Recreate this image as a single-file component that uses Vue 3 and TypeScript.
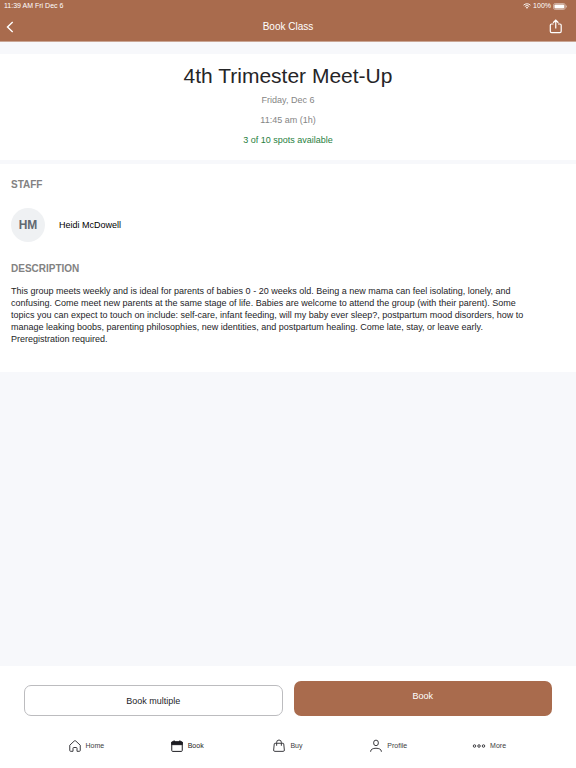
<script setup lang="ts">
import { ref } from 'vue'

type TabId = 'home' | 'book' | 'buy' | 'profile' | 'more'

interface Tab {
  id: TabId
  label: string
}

const tabs: Tab[] = [
  { id: 'home', label: 'Home' },
  { id: 'book', label: 'Book' },
  { id: 'buy', label: 'Buy' },
  { id: 'profile', label: 'Profile' },
  { id: 'more', label: 'More' },
]

const activeTab = ref<TabId>('book')

const session = {
  title: '4th Trimester Meet-Up',
  date: 'Friday, Dec 6',
  time: '11:45 am (1h)',
  spots: '3 of 10 spots available',
  staff: { initials: 'HM', name: 'Heidi McDowell' },
  description:
    'This group meets weekly and is ideal for parents of babies 0 - 20 weeks old. Being a new mama can feel isolating, lonely, and confusing. Come meet new parents at the same stage of life. Babies are welcome to attend the group (with their parent). Some topics you can expect to touch on include: self-care, infant feeding, will my baby ever sleep?, postpartum mood disorders, how to manage leaking boobs, parenting philosophies, new identities, and postpartum healing. Come late, stay, or leave early. Preregistration required.',
}
</script>

<template>
  <div class="screen">
    <header class="top">
      <div class="status">
        <span>11:39 AM Fri Dec 6</span>
        <span class="status-right">
          <svg class="wifi" viewBox="0 0 16 12" aria-hidden="true">
            <path d="M1 4.4a10 10 0 0 1 14 0M3.6 7a6.3 6.3 0 0 1 8.8 0" fill="none" stroke="currentColor" stroke-width="1.8" />
            <path d="M8 11.6 5.6 9.1a3.5 3.5 0 0 1 4.8 0z" fill="currentColor" />
          </svg>
          <span>100%</span>
          <svg class="battery" viewBox="0 0 28 14" aria-hidden="true">
            <rect x="1" y="1" width="23.5" height="12" rx="3.6" fill="none" stroke="currentColor" stroke-opacity=".65" stroke-width="1.4" />
            <rect x="2.8" y="2.8" width="19.9" height="8.4" rx="2.2" fill="currentColor" />
            <path d="M26 4.6c1.8.7 1.8 4.1 0 4.8z" fill="currentColor" fill-opacity=".75" />
          </svg>
        </span>
      </div>
      <div class="bar">
        <button class="icon-button" type="button" aria-label="Back">
          <svg class="back" viewBox="0 0 8 12" aria-hidden="true">
            <path d="M6.700 1 1.500 6l5.200 5" fill="none" stroke="currentColor" stroke-width="1.400" />
          </svg>
        </button>
        <h1 class="bar-title">Book Class</h1>
        <button class="icon-button end" type="button" aria-label="Share">
          <svg class="share" viewBox="0 0 14 15" aria-hidden="true">
            <path d="M4.5 5H2.6c-.8 0-1.3.5-1.3 1.3v6c0 .8.5 1.3 1.3 1.3h8.3c.8 0 1.3-.5 1.3-1.3v-6c0-.8-.5-1.3-1.3-1.3H9M6.75 9.5V1.3M4.1 3.8l2.65-2.6L9.4 3.8" fill="none" stroke="currentColor" stroke-width="1.2" />
          </svg>
        </button>
      </div>
    </header>

    <main class="content">
      <section class="summary">
        <h2 class="title">{{ session.title }}</h2>
        <p>{{ session.date }}</p>
        <p>{{ session.time }}</p>
        <p class="spots">{{ session.spots }}</p>
      </section>

      <section class="details">
        <h3>STAFF</h3>
        <div class="staff">
          <span class="avatar" aria-hidden="true">{{ session.staff.initials }}</span>
          <span>{{ session.staff.name }}</span>
        </div>
        <h3>DESCRIPTION</h3>
        <p class="description">{{ session.description }}</p>
      </section>
    </main>

    <footer class="bottom">
      <div class="actions">
        <button class="action outline" type="button">Book multiple</button>
        <button class="action solid" type="button">Book</button>
      </div>
      <nav class="tabs">
        <a
          v-for="tab in tabs"
          :key="tab.id"
          :href="`#${tab.id}`"
          class="tab"
          :class="{ active: tab.id === activeTab }"
          @click="activeTab = tab.id"
        >
          <svg v-if="tab.id === 'home'" class="tab-icon" viewBox="0 0 24 24" aria-hidden="true">
            <path d="M1.5 10.400 10.500 2a2.200 2.200 0 0 1 3 0l9 8.400V21a1.600 1.600 0 0 1-1.600 1.600h-4.900v-6.200a1.400 1.400 0 0 0-1.400-1.400H9.400A1.400 1.400 0 0 0 8 16.400v6.200H3.100A1.600 1.600 0 0 1 1.500 21z" />
          </svg>
          <svg v-else-if="tab.id === 'book'" class="tab-icon" viewBox="0 0 24 24" aria-hidden="true">
            <rect x="1.5" y="3.5" width="21" height="19.3" rx="1.8" />
            <path d="M1.5 4h21v5.3h-21z" fill="currentColor" />
            <path d="M6.3 1v4M17.7 1v4" stroke-width="3" />
          </svg>
          <svg v-else-if="tab.id === 'buy'" class="tab-icon" viewBox="0 0 24 24" aria-hidden="true">
            <path d="M4.100 6.500h15.800a1.600 1.600 0 0 1 1.600 1.400l1.200 12.200a2.300 2.300 0 0 1-2.300 2.600H3.600a2.300 2.300 0 0 1-2.300-2.600L2.500 7.900a1.600 1.600 0 0 1 1.600-1.400z" />
            <path d="M7.300 11.500V4.700a4.700 4.700 0 0 1 9.400 0v6.800" />
          </svg>
          <svg v-else-if="tab.id === 'profile'" class="tab-icon" viewBox="0 0 24 24" aria-hidden="true">
            <ellipse cx="12" cy="5.800" rx="4.800" ry="5.600" />
            <path d="M1.300 23.800v-1.300c0-3.600 4.400-6 10.700-6s10.700 2.400 10.700 6v1.300" />
          </svg>
          <svg v-else class="tab-icon" viewBox="0 0 24 24" aria-hidden="true">
            <circle cx="3" cy="12" r="2.500" />
            <circle cx="12" cy="12" r="2.500" />
            <circle cx="21" cy="12" r="2.500" />
          </svg>
          <span>{{ tab.label }}</span>
        </a>
      </nav>
    </footer>
  </div>
</template>

<style>
body {
  margin: 0;
}
</style>

<style scoped>
.screen {
  display: flex;
  flex-direction: column;
  min-height: 100vh;
  background: #f7f8fb;
  color: #1d1d1f;
  font-family: "Liberation Sans", Arial, sans-serif;
  font-size: 9px;
  line-height: 12px;
}

h1,
h2,
h3,
p {
  margin: 0;
}

button {
  font: inherit;
  cursor: pointer;
}

.top {
  background: #a96b4d;
  border-bottom: 1px solid #c9a594;
  color: #fff;
}

.status {
  display: flex;
  justify-content: space-between;
  padding: 0 9px 0 4px;
  font-size: 7px;
}

.status-right {
  display: flex;
  align-items: center;
  gap: 2px;
}

.wifi {
  width: 8px;
  height: 6px;
}

.battery {
  width: 14px;
  height: 7px;
}

.bar {
  display: grid;
  grid-template-columns: 1fr auto 1fr;
  align-items: center;
  height: 29px;
  padding: 0 6px;
}

.bar-title {
  font-size: 10px;
  font-weight: 400;
}

.icon-button {
  display: flex;
  justify-self: start;
  padding: 0;
  border: 0;
  background: none;
  color: inherit;
}

.icon-button.end {
  justify-self: end;
  padding-right: 7px;
}

.back {
  width: 8px;
  height: 12px;
}

.share {
  width: 14px;
  height: 15px;
}

.content {
  flex: 1;
  padding-top: 12px;
}

.summary {
  display: flex;
  flex-direction: column;
  gap: 8px;
  padding: 12px 12px 14px;
  background: #fff;
  color: #858585;
  text-align: center;
}

.title {
  color: #252527;
  font-size: 21px;
  font-weight: 400;
  line-height: 20px;
}

.spots {
  color: #1f8040;
}

.details {
  margin-top: 4px;
  padding: 15px 11px 27px;
  background: #fff;
}

h3 {
  color: #828282;
  font-size: 10px;
}

.staff {
  display: flex;
  align-items: center;
  gap: 14px;
  padding: 17px 0 21px;
  color: #000;
}

.avatar {
  display: grid;
  place-items: center;
  width: 34px;
  height: 34px;
  border-radius: 50%;
  background: #eff1f3;
  color: #626870;
  font-size: 12px;
  font-weight: 700;
}

.description {
  padding: 10px 36px 0 0;
}

.bottom {
  padding: 15px 24px 16px;
  background: #fff;
}

.actions {
  display: grid;
  grid-template-columns: 1fr 1fr;
  align-items: end;
  gap: 11px;
}

.action {
  border-radius: 7px;
}

.outline {
  height: 31px;
  border: 1px solid #bcbcbf;
  background: #fff;
  color: #1d1d1f;
}

.solid {
  padding: 9px 8px 14px;
  border: 0;
  background: #a96b4d;
  color: #fff;
}

.tabs {
  display: grid;
  grid-template-columns: repeat(5, 1fr);
  padding: 24px 12px 0;
}

.tab {
  display: flex;
  align-items: center;
  justify-content: center;
  gap: 5px;
  color: #3c3c40;
  font-size: 7px;
  text-decoration: none;
}

.tab.active {
  color: #1d1d22;
}

.tab-icon {
  width: 12px;
  height: 12px;
  overflow: visible;
  fill: none;
  stroke: currentColor;
  stroke-width: 2;
}
</style>
